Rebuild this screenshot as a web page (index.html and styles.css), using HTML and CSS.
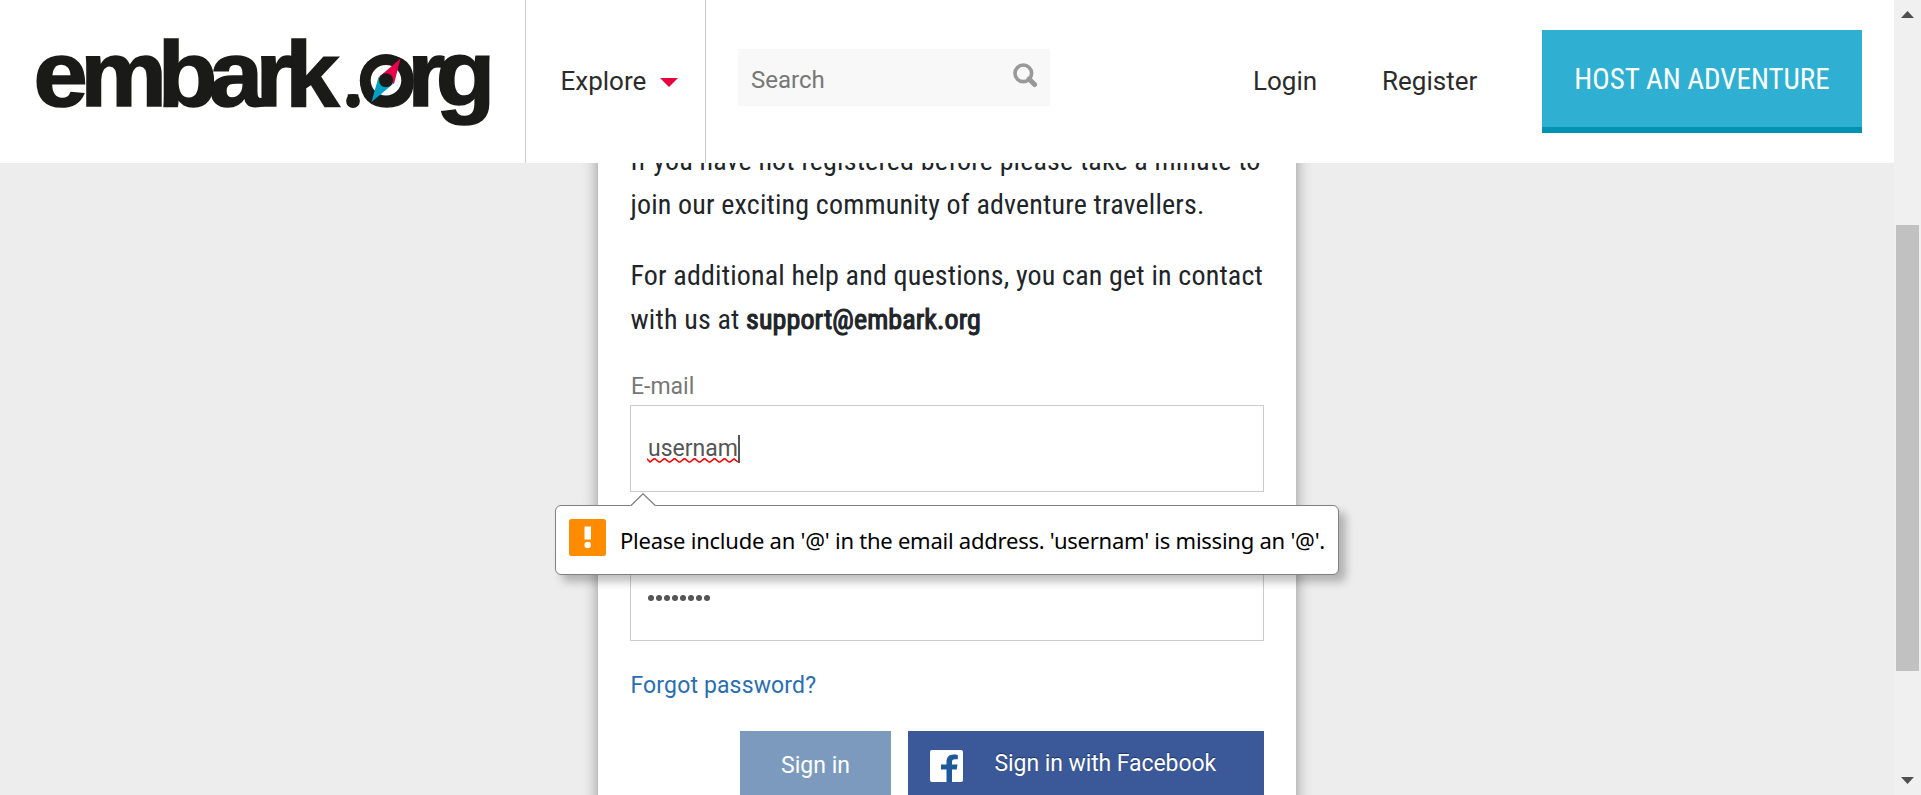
FILE: index.html
```html
<!DOCTYPE html>
<html lang="en">
<head>
<meta charset="utf-8">
<title>embark.org</title>
<link rel="stylesheet" href="styles.css">
</head>
<body>
<div class="window">
  <div class="page">
    <header class="header">
      <a class="logo">
        <svg width="525" height="163" viewBox="0 0 525 163">
          <text class="logo-text" transform="scale(1.06 1)" y="106.500" x="31.5 75.7 148.8 197.200 241 269.200 324.700 337 384.200 411">embark<tspan class="logo-dot" dy="-2">.</tspan><tspan dy="2">o</tspan>rg</text>
          <circle cx="353" cy="101" r="6.900" fill="#1a1a18"/>
          <circle cx="386" cy="80.3" r="26.2" fill="#1a1a18"/>
          <circle cx="386" cy="80.3" r="15.3" fill="#fff"/>
          <path d="M400.5 58.5 394 84 379 77z" fill="#e6004b"/>
          <path d="M371.500 102 378.500 77 393 84z" fill="#00a0c6"/>
          <circle cx="386" cy="80.3" r="7" fill="#1a1a18"/>
        </svg>
      </a>
      <nav class="explore"><span class="t-explore">Explore</span><i class="caret-down"></i></nav>
      <div class="search">
        <span class="t-search">Search</span>
        <svg class="search-icon" width="26" height="26" viewBox="0 0 26 26">
          <circle cx="11.300" cy="11.300" r="8.300" fill="none" stroke="#999" stroke-width="3.600"/>
          <path d="M17 17l5.600 5.600" stroke="#999" stroke-width="5" stroke-linecap="round"/>
        </svg>
      </div>
      <a class="login">Login</a>
      <a class="register">Register</a>
      <a class="host"><span class="t-host">HOST AN ADVENTURE</span></a>
    </header>
    <main class="main">
      <section class="card">
        <p class="copy"><span>If you have not registered before please take a minute to</span><br><span>join our exciting community of adventure travellers.</span></p>
        <p class="copy"><span>For additional help and questions, you can get in contact</span><br><span>with us at</span> <b>support@embark.org</b></p>
        <div class="label">E-mail</div>
        <div class="field">
          <span class="value">usernam<svg class="squiggle" width="92" height="5" viewBox="0 0 92 5"><path d="M0 .8 3 4 7 .8h1L12 4h1L17 .8h1L22 4h1L27 .8h1L32 4h1L37 .8h1L42 4h1L47 .8h1L52 4h1L57 .8h1L62 4h1L67 .8h1L72 4h1L77 .8h1L82 4h1L87 .8 91 4" fill="none" stroke="#f00" stroke-width="1.500"/></svg></span><i class="cursor"></i>
          <div class="bubble">
            <svg class="tip" width="27" height="14" viewBox="0 0 27 14"><path d="M0 14 .8 12.500 13 .7 25.500 12.500 27 14z" fill="#fff"/><path d="M.8 12.800 13 .7 25.500 12.800" fill="none" stroke="#808080" stroke-width="1.200"/></svg>
            <svg class="warn" width="37" height="37" viewBox="0 0 37 37"><rect width="37" height="37" rx="2.500" fill="#ff8c00"/><path d="M15.500 7.500h6.500v13h-6.500z" fill="#fff"/><circle cx="18.700" cy="26" r="3.200" fill="#fff"/></svg>
            <span class="t-bubble">Please include an '@' in the email address. 'usernam' is missing an '@'.</span>
          </div>
        </div>
        <div class="field password">
          <span class="dots"><i></i><i></i><i></i><i></i><i></i><i></i><i></i><i></i></span>
        </div>
        <a class="forgot"><span>Forgot password?</span></a>
        <div class="actions">
          <a class="signin"><span>Sign in</span></a>
          <a class="facebook">
            <svg class="fb-icon" width="33" height="32" viewBox="0 0 33 32"><rect width="33" height="32" rx="2" fill="#fff"/><path d="M16.500 32V19.500h-5.500v-5h5.500v-2.500c0-4.800 2.500-7.500 7-7.500 1.700 0 3.300.2 4.300.4v4.300h-2.700c-2.400 0-3.100 1-3.100 2.700v2.600h5.500l-.8 5h-4.700V32z" fill="#1e5a9b"/></svg>
            <span class="t-fb">Sign in with Facebook</span>
          </a>
        </div>
      </section>
    </main>
  </div>
  <div class="scrollbar">
    <svg class="up" width="13" height="7" viewBox="0 0 13 7"><path d="M6.500 0 13 7H0z" fill="#505050"/></svg>
    <div class="thumb"></div>
    <svg class="down" width="13" height="7" viewBox="0 0 13 7"><path d="M6.500 7 13 0H0z" fill="#505050"/></svg>
  </div>
</div>
</body>
</html>
```
FILE: styles.css
```css
* { box-sizing: border-box; }
body { margin: 0; font-family: Roboto, "Liberation Sans", sans-serif; background: #ededed; }
span { white-space: nowrap; }
.window { display: grid; grid-template-columns: 1894px 27px; height: 795px; overflow: hidden; }
.page { display: grid; grid-template-rows: 163px 632px; }
.header { background: #fff; display: flex; align-items: center; font-size: 26px; color: #2b2b2b; }
.logo { width: 525px; height: 163px; flex: none; }
.logo svg { display: block; }
.logo-text { font: bold 92px "Liberation Sans", Arial, sans-serif; fill: #1a1a18; stroke: #1a1a18; stroke-width: 1.6px; }
.logo-dot { font-size: 60px; }
.explore { width: 181px; height: 163px; flex: none; border: solid #ccc; border-width: 0 1px; padding-left: 34.5px; display: flex; align-items: center; }
.t-explore { width: 99.5px; margin-top: -2px; }
.caret-down { border: 9px solid transparent; border-top-color: #e6003e; border-bottom: 0; margin-top: 1px; }
.search { width: 312px; height: 57px; margin: 0 0 8px 32px; padding: 4px 12px 0 13px; background: #f8f8f8; color: #777; font-size: 24px; display: flex; align-items: center; justify-content: space-between; flex: none; }
.search-icon { margin-bottom: 9px; }
.login { margin: -2px 0 0 203px; width: 129px; flex: none; }
.register { width: 160px; flex: none; margin-top: -2px; }
.host { width: 320px; height: 103px; background: #2fb0d2; border-bottom: 6px solid #0091b3; color: #fff; font-family: "Roboto Condensed", Roboto, sans-serif; font-stretch: 75%; font-size: 29px; display: flex; align-items: center; justify-content: center; }
.main { overflow: hidden; background: #ededed; }
.card { width: 698px; height: 700px; margin: -25px 0 0 598px; padding: 1px 32px 0; background: #fff; box-shadow: 0 0 14px rgba(0,0,0,.4); }
.copy { margin: 0 0 27px .5px; font-family: "Roboto Condensed", Roboto, sans-serif; font-stretch: 75%; font-size: 28px; line-height: 44px; color: #212529; letter-spacing: .17px; }
.copy b { font-weight: 400; -webkit-text-stroke: 1.1px #212529; letter-spacing: .1px; }
.label { line-height: 36px; height: 36px; font-size: 23px; color: #777; padding-left: 1px; }
.field { position: relative; width: 634px; height: 87px; border: 1px solid #ccc; padding-left: 17px; display: flex; align-items: center; font-size: 23px; color: #555; }
.password { margin-top: 62px; }
.value { position: relative; }
.squiggle { position: absolute; left: -1px; bottom: -1px; }
.cursor { width: 2px; height: 28px; background: #555; }
.bubble { position: absolute; z-index: 2; left: -76px; top: 99px; width: 784px; height: 70px; background: #fff; border: 1px solid #808080; border-radius: 6px; box-shadow: 7px 7px 8px rgba(0,0,0,.25); display: flex; align-items: flex-start; padding: 13px 0 0 13px; color: #000; font-family: "Noto Sans", sans-serif; font-size: 22px; letter-spacing: -.24px; }
.tip { position: absolute; left: 74px; top: -13px; }
.warn { flex: none; }
.t-bubble { margin-left: 14px; line-height: 42px; }
.dots { display: flex; gap: 2px; }
.dots i { width: 6px; height: 6px; border-radius: 50%; background: #555; }
.forgot { display: block; margin: 27px 0 27px .5px; line-height: 36px; font-size: 23px; letter-spacing: .14px; color: #2a6eb0; }
.actions { display: flex; gap: 17px; margin-left: 110px; color: #fff; font-size: 23px; }
.signin { width: 151px; height: 70px; background: #7c9abd; display: flex; justify-content: center; line-height: 69px; }
.facebook { width: 356px; height: 70px; background: #3b5998; display: flex; padding-left: 22px; line-height: 66px; letter-spacing: -.08px; text-shadow: 0 -1px 1px #20365f; }
.fb-icon { margin: 19px 31.5px 0 0; }
.scrollbar { background: #f0f0f0; display: grid; grid-template-rows: 225px 446px 124px; justify-items: center; }
.up { margin-top: 11px; }
.thumb { width: 23px; background: #c1c1c1; }
.down { margin-top: 106px; }
```
